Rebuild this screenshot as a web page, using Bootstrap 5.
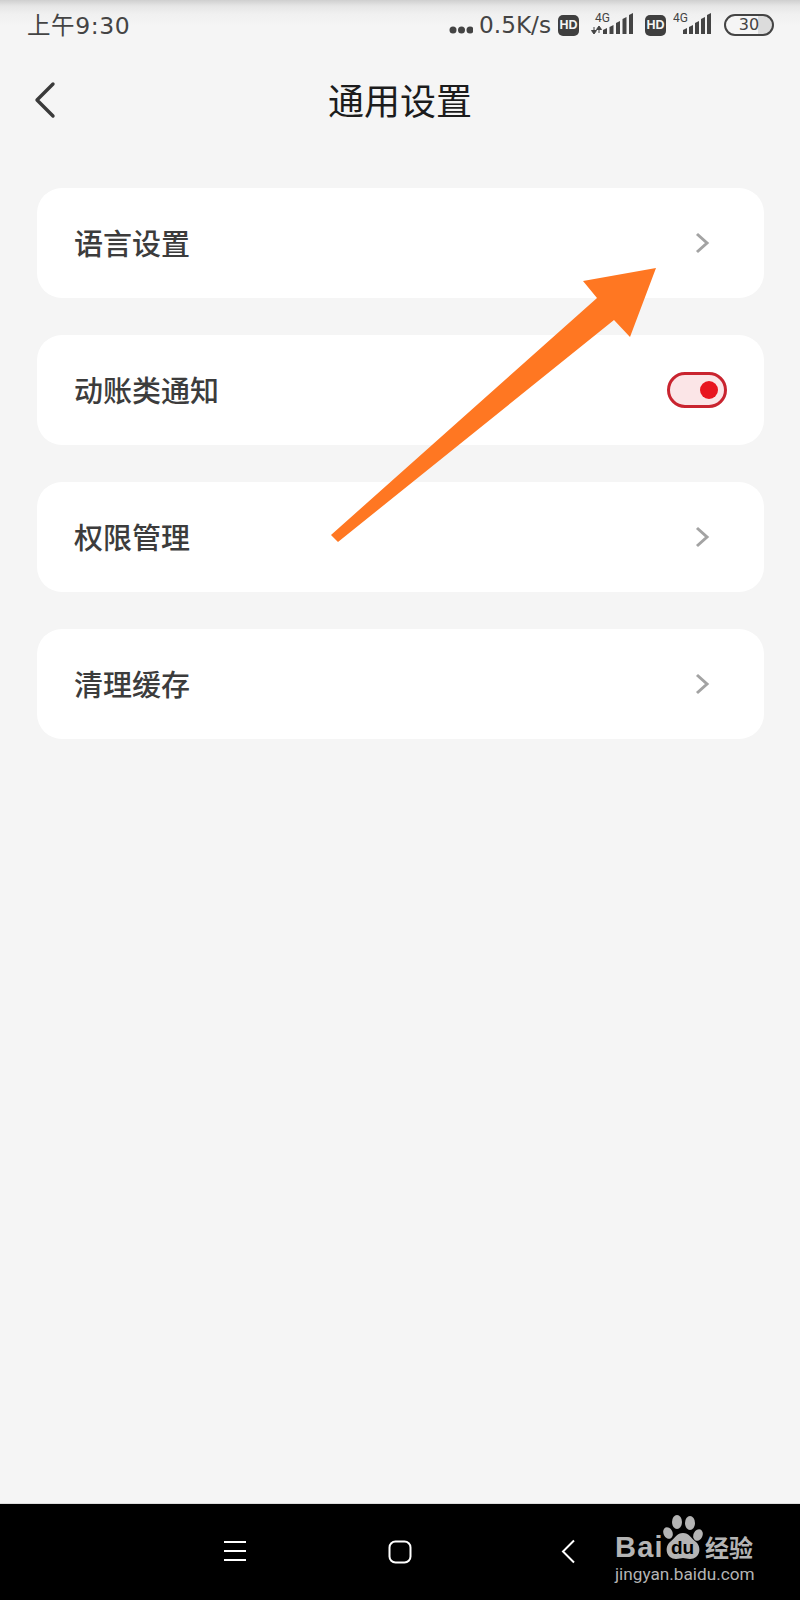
<!DOCTYPE html>
<html lang="zh-CN">
<head>
<meta charset="UTF-8">
<meta name="viewport" content="width=device-width, initial-scale=1.0">
<title>通用设置</title>
<link href="https://cdn.jsdelivr.net/npm/bootstrap@5.3.0/dist/css/bootstrap.min.css" rel="stylesheet">
<style>
    body {
        background-color: #f5f5f5;
        font-family: "Roboto", "Noto Sans CJK SC", sans-serif;
    }
    .phone-page {
        width: 800px;
        height: 1600px;
    }
    /* status bar */
    .status-strip {
        height: 50px;
        padding: 0 26px 0 27px;
        color: #444;
        font-family: "DejaVu Sans", "Noto Sans CJK SC", sans-serif;
        background: linear-gradient(#cfcfcf 0, #e6e6e6 6px, #f0f0f0 14px, #f5f5f5 26px);
    }
    .status-time { font-size: 23.5px; line-height: 1; letter-spacing: .6px; margin-top: 3px; }
    .status-speed { font-size: 23.2px; line-height: 1; margin-left: 6px; }
    .status-dots { width: 24px; height: 8px; margin-top: 10px; }
    .hd-tag {
        width: 21px;
        height: 21px;
        margin-left: 7px;
        border-radius: 5px;
        background: #3f3f3f;
        color: #f5f5f5;
        font: 700 12.5px/21px "Liberation Sans", sans-serif;
        text-align: center;
    }
    .sig-wrap { width: 44px; height: 30px; margin-left: 11px; }
    .sig-wrap-b { width: 40px; height: 30px; margin-left: 7px; }
    .sig-text { font: 400 12px "Roboto", sans-serif; fill: #444; }
    .batt-box {
        width: 50px;
        height: 22px;
        margin-left: 11px;
        border: 2px solid #444;
        border-radius: 11px;
        font-size: 16px;
        line-height: 18px;
        text-align: center;
        background: linear-gradient(90deg, #f5f5f5 70%, #dcdcdc 70%);
    }
    .hd-gap { margin-left: 11px; }
    /* header */
    .title-bar { height: 102px; padding-top: 4px; }
    .title-text { font-size: 36px; line-height: 1; color: #1c1c1c; font-weight: 400; }
    .back-btn { left: 33px; top: 31px; width: 24px; height: 38px; }
    /* setting rows */
    .setting-list { padding: 36px 36px 0 37px; gap: 37px; }
    .setting-row {
        height: 110px;
        padding: 0 37px 0 37px;
        border-radius: 25px;
        background: #fff;
    }
    .setting-name { font-size: 29px; line-height: 1; font-weight: 500; color: #3c3c3c; padding-top: 4px; }
    .chev-icon { width: 16px; height: 24px; margin-right: 17px; }
    .toggle-pill {
        width: 60px;
        height: 36px;
        border: 3px solid #c9242f;
        border-radius: 18px;
        background: #fbe5e7;
    }
    .toggle-knob {
        width: 18px;
        height: 18px;
        border-radius: 50%;
        background: #e8151f;
        margin-right: 6px;
    }
    /* arrow drawn on top of the screenshot */
    .arrow-layer { left: 0; top: 0; width: 800px; height: 600px; pointer-events: none; }
    /* bottom nav */
    .nav-strip { height: 97px; background: #000; border-top: 1px solid #ddd; }
    .nav-menu { left: 224px; top: 35px; width: 22px; height: 24px; }
    .nav-home { left: 388px; top: 36px; width: 24px; height: 24px; }
    .nav-back { left: 560px; top: 35px; width: 15px; height: 25px; }
    .wm-box { left: 615px; top: 11px; width: 142px; height: 80px; color: #b4b4b4; }
    .wm-bai { left: 0; top: 18px; font: 700 29px/1 "Liberation Sans", sans-serif; letter-spacing: 1.2px; }
    .wm-jy { left: 90px; top: 20px; font: 700 24px/1 "Noto Sans CJK SC", sans-serif; }
    .wm-url { left: 0; top: 51px; font: 400 17.2px/1 "Roboto", sans-serif; white-space: nowrap; }
    .wm-paw { left: 48px; top: 0; width: 40px; height: 45px; }
    .wm-du { font: 700 19px "Liberation Sans", sans-serif; fill: #000; }
</style>
</head>
<body>

<div class="phone-page position-relative d-flex flex-column overflow-hidden">

    <!-- status bar -->
    <div class="status-strip d-flex align-items-center justify-content-between">
        <span class="status-time">上午9:30</span>
        <div class="d-flex align-items-center">
            <svg class="status-dots" viewBox="0 0 24 8"><circle cx="4" cy="4" r="3.5" fill="#444"/><circle cx="12.5" cy="4" r="3.5" fill="#444"/><circle cx="21" cy="4" r="3.5" fill="#444"/></svg>
            <span class="status-speed">0.5K/s</span>
            <span class="hd-tag">HD</span>
            <svg class="sig-wrap" viewBox="0 0 44 30">
                <text class="sig-text" x="5" y="12">4G</text>
                <path d="M4 17v6M1.5 20.5 4 24l2.5-3.5zM9 17v6M6.5 19.5 9 16l2.5 3.5z" stroke="#444" stroke-width="1" fill="#444"/>
                <path d="M13 20l4-2v6h-4zM19.5 17l4-2v9h-4zM26 13l4-2v13h-4zM32.5 9l4-2v17h-4zM39 5l4-2v21h-4z" fill="#444"/>
            </svg>
            <span class="hd-tag hd-gap">HD</span>
            <svg class="sig-wrap-b" viewBox="0 0 40 30">
                <text class="sig-text" x="0" y="12">4G</text>
                <path d="M10 20l4-2v6h-4zM16 17l4-2v9h-4zM22 13l4-2v13h-4zM28 9l4-2v17h-4zM34 5l4-2v21h-4z" fill="#444"/>
            </svg>
            <div class="batt-box">30</div>
        </div>
    </div>

    <!-- header -->
    <div class="title-bar position-relative d-flex align-items-center justify-content-center">
        <svg class="back-btn position-absolute" viewBox="0 0 24 38"><path d="M20 3 4 19l16 16" fill="none" stroke="#3a3a3a" stroke-width="3.4" stroke-linecap="round" stroke-linejoin="round"/></svg>
        <span class="title-text">通用设置</span>
    </div>

    <!-- rows -->
    <div class="setting-list d-flex flex-column flex-grow-1">
        <div class="setting-row d-flex align-items-center justify-content-between">
            <span class="setting-name">语言设置</span>
            <svg class="chev-icon" viewBox="0 0 16 24"><path d="M3 3l10 9-10 9" fill="none" stroke="#a3a3a3" stroke-width="3"/></svg>
        </div>
        <div class="setting-row d-flex align-items-center justify-content-between">
            <span class="setting-name">动账类通知</span>
            <div class="toggle-pill d-flex align-items-center justify-content-end"><div class="toggle-knob"></div></div>
        </div>
        <div class="setting-row d-flex align-items-center justify-content-between">
            <span class="setting-name">权限管理</span>
            <svg class="chev-icon" viewBox="0 0 16 24"><path d="M3 3l10 9-10 9" fill="none" stroke="#a3a3a3" stroke-width="3"/></svg>
        </div>
        <div class="setting-row d-flex align-items-center justify-content-between">
            <span class="setting-name">清理缓存</span>
            <svg class="chev-icon" viewBox="0 0 16 24"><path d="M3 3l10 9-10 9" fill="none" stroke="#a3a3a3" stroke-width="3"/></svg>
        </div>
    </div>

    <!-- bottom nav -->
    <div class="nav-strip position-relative">
        <svg class="nav-menu position-absolute" viewBox="0 0 22 24"><path d="M0 3h22M0 12h22M0 21h22" stroke="#fff" stroke-width="2" fill="none"/></svg>
        <svg class="nav-home position-absolute" viewBox="0 0 24 24"><rect x="1.5" y="1.5" width="21" height="21" rx="6" fill="none" stroke="#fff" stroke-width="2"/></svg>
        <svg class="nav-back position-absolute" viewBox="0 0 15 25"><path d="M14 1.5 3 12.5 14 23.5" fill="none" stroke="#fff" stroke-width="2"/></svg>
        <div class="wm-box position-absolute">
            <span class="wm-bai position-absolute">Bai</span>
            <svg class="wm-paw position-absolute" viewBox="0 0 40 45">
                <ellipse cx="14" cy="7" rx="5" ry="7" fill="#b4b4b4"/>
                <ellipse cx="27" cy="8" rx="5" ry="7" fill="#b4b4b4"/>
                <ellipse cx="5" cy="18" rx="4.5" ry="6" fill="#b4b4b4" transform="rotate(-25 5 18)"/>
                <ellipse cx="35" cy="20" rx="4.5" ry="6" fill="#b4b4b4" transform="rotate(25 35 20)"/>
                <path d="M20 18c6 0 8 5 13 9 6 5 4 17-6 17-3 0-5-1-7-1s-4 1-7 1c-10 0-12-12-6-17 5-4 7-9 13-9z" fill="#b4b4b4"/>
                <text class="wm-du" x="8" y="39">du</text>
            </svg>
            <span class="wm-jy position-absolute">经验</span>
            <span class="wm-url position-absolute">jingyan.baidu.com</span>
        </div>
    </div>

    <!-- annotation arrow over the rows -->
    <svg class="arrow-layer position-absolute" viewBox="0 0 800 600">
        <polygon points="656,268 630,337 614,320 338,542 331,535 597,298 583,281" fill="#ff7722"/>
    </svg>
</div>

<script src="https://cdn.jsdelivr.net/npm/bootstrap@5.3.0/dist/js/bootstrap.bundle.min.js"></script>
</body>
</html>
